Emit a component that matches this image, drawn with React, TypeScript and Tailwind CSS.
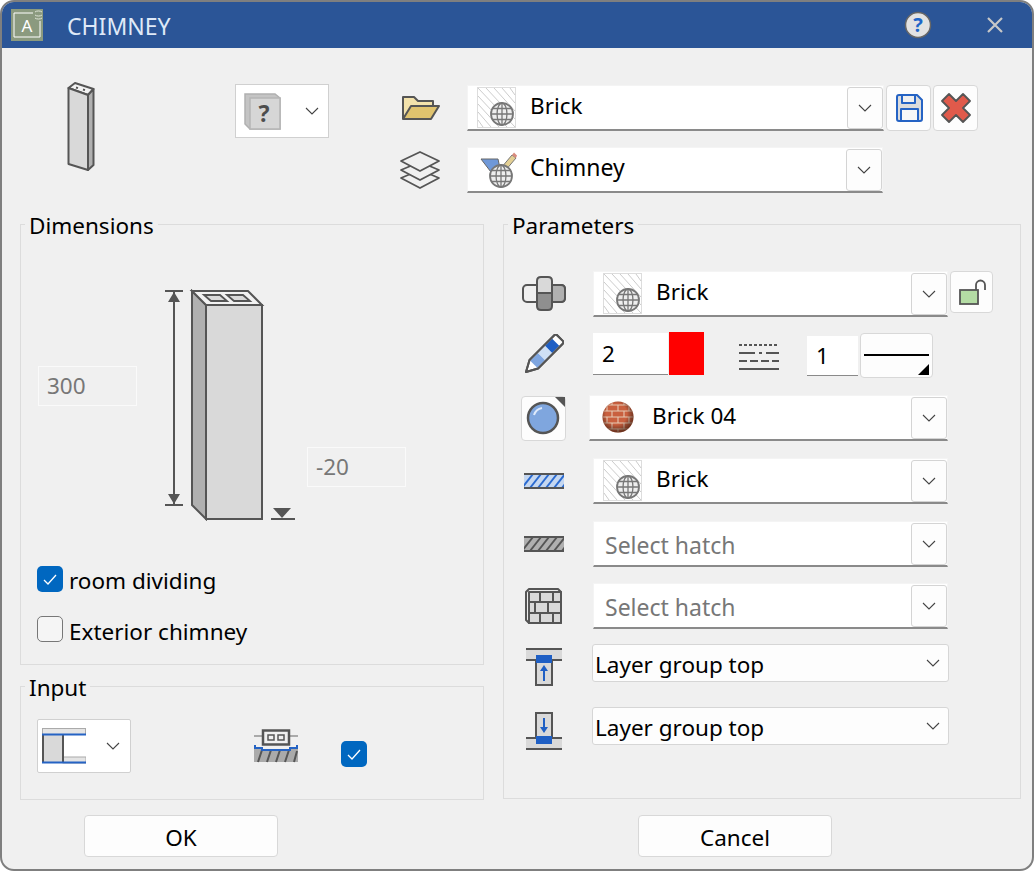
import type { ReactNode } from "react"

const ink = "#555555"

function Chevron() {
  return (
    <svg width="14" height="8" viewBox="0 0 14 8" fill="none" stroke="#444" strokeWidth="1.1">
      <path d="M1 1l6 6 6-6" />
    </svg>
  )
}

function Globe({ cx, cy, r }: { cx: number; cy: number; r: number }) {
  return (
    <g fill="none" stroke="#777" strokeWidth="1.3">
      <circle cx={cx} cy={cy} r={r} fill="#eee" strokeWidth="1.8" />
      <ellipse cx={cx} cy={cy} rx={r * 0.45} ry={r} />
      <path d={`M${cx} ${cy - r}V${cy + r}M${cx - r} ${cy}H${cx + r}M${cx - r * 0.85} ${cy - r * 0.5}H${cx + r * 0.85}M${cx - r * 0.85} ${cy + r * 0.5}H${cx + r * 0.85}`} />
    </g>
  )
}

function HatchSwatch() {
  const offsets = [-32, -24, -16, -8, 0, 8, 16, 24, 32]
  return (
    <svg width="40" height="42" viewBox="0 0 40 42">
      <rect x="0.5" y="0.5" width="38" height="40" fill="#fff" stroke="#bbb" strokeDasharray="1 1" />
      <g stroke="#ccc" strokeWidth="1">
        {offsets.map((o) => (
          <line key={o} x1={Math.max(1, 1 + o)} y1={Math.max(1, 1 - o)} x2={Math.min(38, 38 + o)} y2={Math.min(40, 38 - o + 2)} />
        ))}
      </g>
      <Globe cx={25} cy={27} r={11} />
    </svg>
  )
}

function LayerGlobe() {
  return (
    <svg width="38" height="38" viewBox="0 0 38 38">
      <path d="M1 8H18L21 22L14 25Z" fill="#6f98d8" stroke="#666" strokeWidth="1" />
      <path d="M21 17L32 4L36 7L25 20Z" fill="#e3cf93" stroke="#777" strokeWidth="1" />
      <path d="M32 4L34 1.500L37 4.500L36 7Z" fill="#d98a7c" />
      <Globe cx={21} cy={25} r={11} />
    </svg>
  )
}

function BrickSphere() {
  const rows = [4, 10, 16, 22, 28]
  return (
    <svg className="mb-[2px]" width="32" height="32" viewBox="0 0 32 32">
      <defs>
        <clipPath id="sphere-clip">
          <circle cx="16" cy="16" r="15.500" />
        </clipPath>
        <radialGradient id="sphere-shade" cx="45%" cy="40%" r="60%">
          <stop offset="55%" stopColor="#000" stopOpacity="0" />
          <stop offset="100%" stopColor="#2b1408" stopOpacity="0.65" />
        </radialGradient>
      </defs>
      <g clipPath="url(#sphere-clip)">
        <rect width="32" height="32" fill="#c9603f" />
        <g stroke="#e6c9b4" strokeWidth="1.100">
          {rows.map((y) => (
            <path key={y} d={`M0 ${y}H32`} />
          ))}
          <path d="M10 0V4M22 0V4M5 4V10M16 4V10M27 4V10M10 10V16M22 10V16M5 16V22M16 16V22M27 16V22M10 22V28M22 22V28M16 28V32" />
        </g>
        <rect width="32" height="32" fill="url(#sphere-shade)" />
      </g>
    </svg>
  )
}

function Combo({ width, left, icon, children }: { width: string; left: string; icon?: ReactNode; children: ReactNode }) {
  return (
    <div className={`flex h-[46px] items-center bg-white border border-[#f4f4f4] border-b-2 border-b-[#8a8a8a] ${width}`}>
      <div className={`flex items-center ${left}`}>
        {icon}
        {children}
      </div>
      <div className="ml-auto flex h-[42px] w-[36px] items-center justify-center rounded-[3px] border border-[#d4d4d4] bg-[#fdfdfd]">
        <Chevron />
      </div>
    </div>
  )
}

function Select() {
  return (
    <div className="ml-[8px] flex h-[38px] w-[357px] items-center justify-between rounded-[3px] border border-[#d6d6d6] bg-[#fdfdfd] pl-[2px] pr-[8px]">
      <span className="mt-[4px]">Layer group top</span>
      <Chevron />
    </div>
  )
}

function Group({ title, className, children }: { title: string; className: string; children: ReactNode }) {
  return (
    <div className={`border border-[#dcdcdc] ${className}`}>
      <div className="-mt-[14px] ml-[4px] h-[30px] w-fit bg-[#f0f0f0] px-[4px] leading-[30px]">{title}</div>
      {children}
    </div>
  )
}

function Check({ checked }: { checked: boolean }) {
  if (!checked) {
    return <div className="h-[26px] w-[26px] shrink-0 rounded-[5px] border border-[#777] bg-[#f5f5f5]" />
  }
  return (
    <div className="flex h-[26px] w-[26px] shrink-0 items-center justify-center rounded-[5px] bg-[#0067c0]">
      <svg width="14" height="11" viewBox="0 0 14 11" fill="none" stroke="#fff" strokeWidth="1.300">
        <path d="M1 6l4 4 8-9" />
      </svg>
    </div>
  )
}

function DimInput({ value, className }: { value: string; className: string }) {
  return <div className={`flex h-[40px] w-[99px] shrink-0 items-center border border-[#fafafa] pl-[8px] text-[#777] ${className}`}>{value}</div>
}

function IconButton({ className, children }: { className: string; children: ReactNode }) {
  return <div className={`flex items-center justify-center rounded-[4px] border border-[#d8d8d8] bg-[#fdfdfd] ${className}`}>{children}</div>
}

function Slot({ children }: { children: ReactNode }) {
  return <div className="flex w-[80px] shrink-0 justify-center">{children}</div>
}

function HatchBar({ bg, line }: { bg: string; line: string }) {
  const xs = [0, 8, 16, 24, 32, 40]
  return (
    <svg width="40" height="16" viewBox="0 0 40 16">
      <rect width="40" height="16" fill={bg} />
      <g stroke={line} strokeWidth="2">
        {xs.map((x) => (
          <line key={x} x1={x - 2} y1="15" x2={x + 9} y2="1" />
        ))}
      </g>
      <path d="M0 1H40M0 15H40" stroke={ink} strokeWidth="2" />
    </svg>
  )
}

function PencilIcon() {
  return (
    <svg width="40" height="40" viewBox="0 0 40 40">
      <g transform="translate(2 38) rotate(-45)" stroke={ink} strokeWidth="2" strokeLinejoin="round">
        <path d="M0 0L11 -6H46Q48 -6 48 -4V4Q48 6 46 6H11Z" fill="#fff" />
        <rect x="11" y="-5" width="11" height="10" fill="#7fa6e0" stroke="none" />
        <rect x="22" y="-5" width="10" height="10" fill="#cfe0f5" stroke="none" />
        <rect x="32" y="-5" width="10" height="10" fill="#1f5fc4" stroke="none" />
        <path d="M0 0L11 -6H46Q48 -6 48 -4V4Q48 6 46 6H11Z" fill="none" />
      </g>
    </svg>
  )
}

export default function App() {
  return (
    <div className="flex h-[871px] w-[1034px] flex-col overflow-hidden rounded-[14px] border-2 border-[#7f7f7f] bg-[#f0f0f0] font-['Noto_Sans',sans-serif] text-[22.5px] text-black">
      <div className="flex h-[46px] shrink-0 items-center bg-[#2b5597]">
        <svg className="ml-[9px] shrink-0" width="32" height="32" viewBox="0 0 32 32">
          <rect width="32" height="32" fill="#8b9a7f" />
          <path d="M22 4H3V28H29V12" fill="none" stroke="#fff" strokeWidth="1" />
          <text x="16" y="23" textAnchor="middle" fontSize="17" fill="#fff" fontFamily="Noto Sans">A</text>
          <path d="M24 3a4 2 0 0 1 7 0M24 6a4 2 0 0 0 7 0M24 9a4 2 0 0 0 7 0" fill="none" stroke="#dfe5d8" strokeWidth="1" />
        </svg>
        <span className="ml-[24px] mt-[2px] text-[23px] text-[#dfe9f7]">CHIMNEY</span>
        <svg className="ml-auto" width="28" height="28" viewBox="0 0 28 28">
          <circle cx="14" cy="14" r="12.500" fill="#e2e2e2" stroke="#666" strokeWidth="1.500" />
          <text x="14" y="21" textAnchor="middle" fontSize="20" fontWeight="700" fill="#1e66c8" fontFamily="Noto Sans">?</text>
        </svg>
        <svg className="ml-[55px] mr-[29px]" width="16" height="16" viewBox="0 0 16 16" stroke="#c8c8c8" strokeWidth="2.200">
          <path d="M1 1L15 15M15 1L1 15" />
        </svg>
      </div>

      <div className="flex h-[176px] shrink-0 items-start pl-[64px]">
        <svg className="mt-[32px] shrink-0" width="30" height="93" viewBox="66 80 30 93" stroke={ink} strokeWidth="2" strokeLinejoin="round">
          <path d="M68.500 88L75 83L93.500 89L88 95Z" fill="#f2f2f2" />
          <path d="M68.500 88L88 95V170L68.500 164Z" fill="#d9d9d9" />
          <path d="M88 95L93.500 89V165L88 170Z" fill="#b0b0b0" />
          <path d="M76 87.500l2 .6M83 89.500l2 .6" strokeWidth="2" />
        </svg>
        <div className="ml-[139px] mt-[36px] flex h-[54px] w-[94px] shrink-0 items-center border border-[#d0d0d0] bg-white pl-[8px]">
          <svg width="37" height="37" viewBox="0 0 37 37">
            <path d="M1 1H31L36 5V36H6L1 31Z" fill="#c4c4c4" stroke="#b0b0b0" strokeWidth="1.500" />
            <rect x="6" y="5" width="30" height="31" fill="#d6d6d6" stroke="#b5b5b5" strokeWidth="1.500" />
            <text x="20" y="29" textAnchor="middle" fontSize="23" fontWeight="700" fill="#4d4d4d" fontFamily="Noto Sans">?</text>
          </svg>
          <div className="ml-[24px]">
            <Chevron />
          </div>
        </div>

        <div className="ml-[71px] mt-[37px] flex flex-col">
          <div className="flex items-center">
            <svg className="ml-[2px] shrink-0" width="38" height="26" viewBox="0 0 38 26" strokeWidth="2" stroke={ink} strokeLinejoin="round">
              <path d="M1 24V2H12L16 6H31V11" fill="#f3e2ab" />
              <path d="M1 24L9 11H37L29 24Z" fill="#e0c36e" />
            </svg>
            <div className="ml-[27px]">
              <Combo width="w-[417px]" left="pl-[9px]" icon={<HatchSwatch />}>
                <span className="mb-[4px] ml-[13px]">Brick</span>
              </Combo>
            </div>
            <IconButton className="ml-[2px] h-[46px] w-[45px]">
              <svg width="28" height="28" viewBox="0 0 28 28" stroke="#2563c4" strokeWidth="2" strokeLinejoin="round">
                <path d="M2 3Q2 1 4 1H22L27 6V25Q27 27 25 27H4Q2 27 2 25Z" fill="#dcdcdc" />
                <rect x="7" y="1" width="13" height="8" fill="#f0f0f0" />
                <rect x="6" y="15" width="17" height="12" fill="#f7f7f7" />
              </svg>
            </IconButton>
            <IconButton className="ml-[2px] h-[46px] w-[45px]">
              <svg width="30" height="30" viewBox="0 0 30 30">
                <path d="M1 8L8 1L15 8L22 1L29 8L22 15L29 22L22 29L15 22L8 29L1 22L8 15Z" fill="#e05a4b" stroke={ink} strokeWidth="1.800" strokeLinejoin="round" />
              </svg>
            </IconButton>
          </div>
          <div className="mt-[16px] flex items-center">
            <svg className="-ml-[1px] shrink-0" width="42" height="40" viewBox="0 0 42 40" fill="#f0f0f0" stroke={ink} strokeWidth="1.800" strokeLinejoin="round">
              <path d="M2 28L21 20L40 28L21 38Z" />
              <path d="M2 20L21 12L40 20L21 30Z" />
              <path d="M2 11L21 2L40 11L21 21Z" />
            </svg>
            <div className="ml-[26px]">
              <Combo width="w-[416px]" left="pl-[12px]" icon={<LayerGlobe />}>
                <span className="mb-[4px] ml-[12px] text-[23px]">Chimney</span>
              </Combo>
            </div>
          </div>
        </div>
      </div>

      <div className="flex shrink-0 items-start pl-[18px]">
        <div className="flex w-[464px] shrink-0 flex-col">
          <Group title="Dimensions" className="h-[441px]">
            <div className="mt-[48px] flex items-start">
              <DimInput value="300" className="ml-[17px] mt-[77px]" />
              <svg className="ml-[28px] shrink-0" width="135" height="232" viewBox="165 289 135 232" stroke={ink} strokeWidth="2">
                <path d="M165 291H183M165 505H183M174 291V505" fill="none" />
                <path d="M174 292L180 302H168ZM174 504L180 494H168Z" fill={ink} stroke="none" />
                <path d="M192 291L206 305V519L192 505Z" fill="#b0b0b0" />
                <path d="M206 305H262V519H206Z" fill="#d9d9d9" />
                <path d="M192 291H248L262 305H206Z" fill="#f2f2f2" />
                <path d="M204 295H220L227 301H211ZM227 295H243L250 301H234Z" fill="#d9d9d9" strokeWidth="1.800" />
                <path d="M273 508H291L282 518Z" fill={ink} stroke="none" />
                <path d="M271 519H295" />
              </svg>
              <DimInput value="-20" className="ml-[7px] mt-[158px]" />
            </div>
            <div className="ml-[16px] mt-[45px] flex h-[26px] items-center gap-[6px]">
              <Check checked />
              <span className="mt-[4px]">room dividing</span>
            </div>
            <div className="ml-[16px] mt-[24px] flex h-[26px] items-center gap-[6px]">
              <Check checked={false} />
              <span className="mt-[6px]">Exterior chimney</span>
            </div>
          </Group>
          <Group title="Input" className="mt-[21px] h-[114px]">
            <div className="mt-[16px] flex items-start">
              <div className="ml-[16px] flex h-[54px] w-[94px] shrink-0 items-center rounded-[2px] border border-[#d0d0d0] bg-white pl-[4px]">
                <svg width="44" height="36" viewBox="0 0 44 36">
                  <rect x="0.500" y="0.500" width="43" height="6" fill="#e4e4e4" stroke="#aaa" />
                  <rect x="0" y="6" width="21" height="29" fill="#d9d9d9" />
                  <rect x="21" y="29" width="23" height="6" fill="#e4e4e4" stroke="#aaa" />
                  <path d="M1 6V35M21 6V35" stroke={ink} strokeWidth="2" />
                  <path d="M0 6.500H44M0 34.500H44" stroke="#2563c4" strokeWidth="2" />
                </svg>
                <div className="ml-[20px]">
                  <Chevron />
                </div>
              </div>
              <svg className="ml-[123px] mt-[10px] shrink-0" width="44" height="34" viewBox="0 0 44 34">
                <path d="M0 7H44" stroke="#aaa" strokeWidth="2" />
                <rect x="9" y="1.500" width="26" height="14" fill="#f0f0f0" stroke={ink} strokeWidth="2.500" />
                <rect x="14" y="6" width="6" height="5" fill="none" stroke={ink} strokeWidth="1.500" />
                <rect x="24" y="6" width="6" height="5" fill="none" stroke={ink} strokeWidth="1.500" />
                <path d="M0 18H7V20H37V18H44V33H0Z" fill="#aaa" />
                <g stroke={ink} strokeWidth="2">
                  <path d="M4 33L8 21M13 33L17 21M22 33L26 21M31 33L35 21M40 33L43 22" />
                </g>
                <path d="M1 16V19H8V21H36V19H43V16" fill="none" stroke="#2563c4" strokeWidth="2" />
              </svg>
              <div className="ml-[43px] mt-[22px]">
                <Check checked />
              </div>
            </div>
          </Group>
        </div>

        <Group title="Parameters" className="ml-[19px] h-[575px] w-[518px] shrink-0">
          <div className="mt-[30px] flex h-[46px] items-center">
            <Slot>
              <svg width="46" height="36" viewBox="0 0 46 36" stroke={ink} strokeWidth="2">
                <rect x="2" y="9" width="42" height="17" rx="4" fill="#f0f0f0" />
                <path d="M30 9H40Q44 9 44 13V22Q44 26 40 26H30Z" fill="#b0b0b0" />
                <path d="M16 5Q16 1 20 1H27Q31 1 31 5V17H16Z" fill="#d9d9d9" />
                <path d="M16 17H31V30Q31 34 27 34H20Q16 34 16 30Z" fill="#8f8f8f" />
              </svg>
            </Slot>
            <div className="ml-[9px] flex items-center">
              <Combo width="w-[355px]" left="pl-[9px]" icon={<HatchSwatch />}>
                <span className="mb-[4px] ml-[13px]">Brick</span>
              </Combo>
              <IconButton className="ml-[2px] h-[42px] w-[43px] self-start">
                <svg width="28" height="28" viewBox="0 0 28 28" stroke={ink} strokeWidth="1.800">
                  <rect x="2" y="12" width="18" height="14" fill="#b4dca4" />
                  <path d="M18 12V7A4.500 4.500 0 0 1 27 7V12" fill="none" />
                </svg>
              </IconButton>
            </div>
          </div>

          <div className="mt-[15px] flex h-[46px] items-start">
            <Slot>
              <div className="mt-[2px]">
                <PencilIcon />
              </div>
            </Slot>
            <div className="ml-[9px] mt-[1px] flex h-[42px] w-[75px] shrink-0 items-center border-b border-b-[#8a8a8a] bg-white pl-[9px]">2</div>
            <div className="ml-[1px] h-[43px] w-[35px] shrink-0 bg-[#ff0000]" />
            <svg className="ml-[35px] mt-[12px] shrink-0" width="40" height="26" viewBox="0 0 40 26" stroke={ink} strokeWidth="2" fill="none">
              <path d="M0 1H40" strokeDasharray="3 2" />
              <path d="M0 9H16M20 9H23M27 9H40" />
              <path d="M0 17H8M11 17H19M22 17H30M33 17H40" />
              <path d="M0 25H40" />
            </svg>
            <div className="ml-[28px] mt-[4px] flex h-[40px] w-[51px] shrink-0 items-center border-b border-b-[#8a8a8a] bg-white pl-[9px]">1</div>
            <div className="ml-[2px] mt-[1px] flex h-[45px] w-[73px] shrink-0 flex-col rounded-[4px] border border-[#d8d8d8] bg-[#fdfdfd] px-[3px]">
              <div className="mt-[20px] h-[2px] bg-black" />
              <div className="ml-auto mt-[8px] h-0 w-0 border-b-[11px] border-l-[11px] border-b-black border-l-transparent" />
            </div>
          </div>

          <div className="mt-[17px] flex h-[46px] items-center">
            <Slot>
              <IconButton className="relative -ml-[2px] h-[45px] w-[45px]">
                <svg width="34" height="34" viewBox="0 0 34 34">
                  <circle cx="17" cy="17" r="15" fill="#7fa6de" stroke={ink} strokeWidth="2.500" />
                  <path d="M8 14Q10 8 16 7" fill="none" stroke="#dfeafa" strokeWidth="2" />
                </svg>
                <div className="absolute right-0 top-0 h-0 w-0 border-l-[10px] border-t-[10px] border-l-transparent border-t-[#555]" />
              </IconButton>
            </Slot>
            <div className="ml-[5px]">
              <Combo width="w-[359px]" left="pl-[12px]" icon={<BrickSphere />}>
                <span className="mb-[4px] ml-[18px]">Brick 04</span>
              </Combo>
            </div>
          </div>

          <div className="mt-[17px] flex h-[46px] items-center">
            <Slot>
              <HatchBar bg="#c5d7f0" line="#2a6ad0" />
            </Slot>
            <div className="ml-[9px]">
              <Combo width="w-[355px]" left="pl-[9px]" icon={<HatchSwatch />}>
                <span className="mb-[4px] ml-[13px]">Brick</span>
              </Combo>
            </div>
          </div>

          <div className="mt-[17px] flex h-[46px] items-center">
            <Slot>
              <HatchBar bg="#b0b0b0" line="#555" />
            </Slot>
            <div className="ml-[9px]">
              <Combo width="w-[355px]" left="pl-[11px]">
                <span className="mt-[4px] text-[23px] text-[#777]">Select hatch</span>
              </Combo>
            </div>
          </div>

          <div className="mt-[16px] flex h-[46px] items-center">
            <Slot>
              <svg className="mr-[2px]" width="38" height="38" viewBox="0 0 38 38" stroke={ink} strokeWidth="2" fill="none" strokeLinejoin="round">
                <path d="M2 5L5 2H34L37 5V36H5L2 33Z" fill="#ededed" />
                <rect x="5" y="5" width="32" height="31" fill="#d9d9d9" />
                <path d="M5 15H37M5 26H37M16 5V15M29 5V15M11 15V26M24 15V26M16 26V36M29 26V36" />
              </svg>
            </Slot>
            <div className="ml-[9px]">
              <Combo width="w-[355px]" left="pl-[11px]">
                <span className="mt-[4px] text-[23px] text-[#777]">Select hatch</span>
              </Combo>
            </div>
          </div>

          <div className="mt-[15px] flex h-[38px] items-center">
            <Slot>
              <svg className="mt-[8px]" width="38" height="38" viewBox="0 0 38 38">
                <rect x="1" y="1" width="36" height="11" fill="#d9d9d9" />
                <path d="M1 1H37M1 12H37" stroke={ink} strokeWidth="2" />
                <rect x="11" y="12" width="16" height="25" fill="#d9d9d9" stroke={ink} strokeWidth="2" />
                <rect x="11" y="7" width="16" height="8" fill="#1f5fc4" />
                <path d="M19 33V20" stroke="#1f5fc4" strokeWidth="2" />
                <path d="M19 17L23 23H15Z" fill="#1f5fc4" />
              </svg>
            </Slot>
            <Select />
          </div>

          <div className="mt-[25px] flex h-[38px] items-center">
            <Slot>
              <svg className="mt-[10px]" width="38" height="38" viewBox="0 0 38 38">
                <rect x="1" y="26" width="36" height="11" fill="#d9d9d9" />
                <path d="M1 26H37M1 37H37" stroke={ink} strokeWidth="2" />
                <rect x="11" y="1" width="16" height="25" fill="#d9d9d9" stroke={ink} strokeWidth="2" />
                <rect x="11" y="24" width="16" height="8" fill="#1f5fc4" />
                <path d="M19 6V18" stroke="#1f5fc4" strokeWidth="2" />
                <path d="M19 21L23 15H15Z" fill="#1f5fc4" />
              </svg>
            </Slot>
            <Select />
          </div>
        </Group>
      </div>

      <div className="mt-[15px] flex pl-[82px]">
        <div className="flex h-[42px] w-[194px] items-center justify-center rounded-[4px] border border-[#d8d8d8] bg-[#fdfdfd] pt-[3px]">OK</div>
        <div className="ml-[360px] flex h-[42px] w-[194px] items-center justify-center rounded-[4px] border border-[#d8d8d8] bg-[#fdfdfd] pt-[3px]">Cancel</div>
      </div>
    </div>
  )
}
